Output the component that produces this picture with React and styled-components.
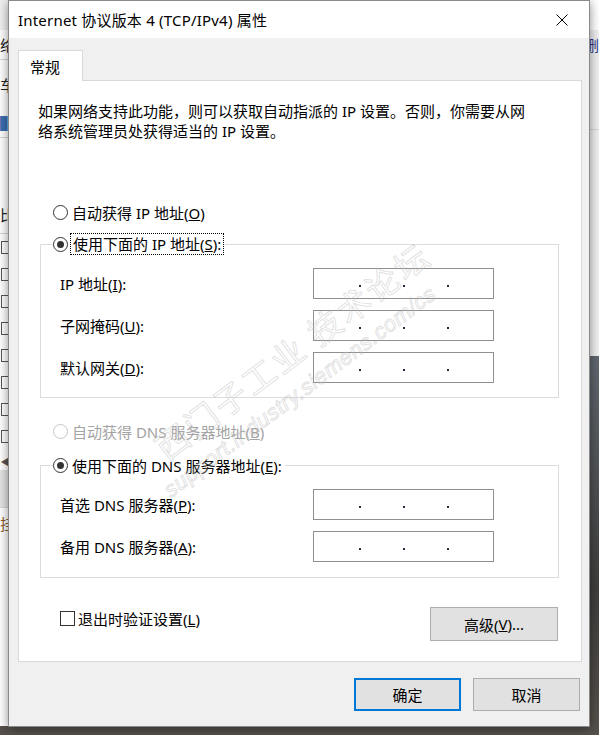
import React from 'react';
import styled, { createGlobalStyle } from 'styled-components';

const GlobalStyle = createGlobalStyle`
  html, body {
    margin: 0;
    padding: 0;
  }
  body {
    width: 599px;
    height: 735px;
    overflow: hidden;
    background: #3a3734;
    font-family: "Noto Sans", "Noto Sans CJK SC", sans-serif;
    font-size: 15px;
    color: #000;
  }
`;

const Desktop = styled.div`
  position: relative;
  width: 599px;
  height: 735px;
  overflow: hidden;
  background: linear-gradient(180deg, #7d8791 0%, #5f666e 50%, #3f3e3c 80%, #57514a 100%);
`;

const BackWindow = styled.div`
  position: absolute;
  left: ${(p) => p.$left}px;
  top: 0;
  width: ${(p) => p.$width}px;
  height: ${(p) => p.$height}px;
  background: ${(p) => p.$bg};
  overflow: hidden;
  display: flex;
  flex-direction: column;
  font-family: "Noto Sans CJK SC", sans-serif;
`;

const BgRow = styled.div`
  height: ${(p) => p.$h}px;
  flex: none;
  display: flex;
  align-items: center;
  padding-left: ${(p) => p.$indent || 0}px;
  background: ${(p) => p.$bg || 'transparent'};
  border-bottom: ${(p) => (p.$line ? '1px solid #d6d6d6' : 'none')};
  color: ${(p) => p.$color || '#222'};
  font-size: 15px;
  line-height: 1;
  white-space: nowrap;
  box-sizing: border-box;
`;

const BgCheck = styled.span`
  width: 11px;
  height: 11px;
  border: 1px solid #555;
  background: #fff;
  margin-left: 1px;
`;

const Dialog = styled.div`
  position: absolute;
  left: 8px;
  top: 0;
  width: 582px;
  height: 727px;
  box-sizing: border-box;
  border: 1px solid #8a8a8a;
  background: #f0f0f0;
  box-shadow: 0 2px 10px rgba(0, 0, 0, 0.45);
  display: flex;
  flex-direction: column;
`;

const TitleBar = styled.div`
  height: 37px;
  flex: none;
  background: #fff;
  display: flex;
  align-items: center;
  justify-content: space-between;
  padding-left: 9px;
`;

const Title = styled.div`
  font-size: 15px;
  line-height: 20px;
  letter-spacing: 0.2px;
  margin-top: 1px;
`;

const CloseButton = styled.div`
  width: 46px;
  height: 37px;
  display: flex;
  align-items: center;
  justify-content: center;
  margin-right: 4px;
`;

const Body = styled.div`
  flex: 1;
  display: flex;
  flex-direction: column;
  padding: 12px 7px 0 9px;
`;

const TabStrip = styled.div`
  display: flex;
  height: 30px;
  position: relative;
  z-index: 1;
`;

const Tab = styled.div`
  width: 65px;
  height: 31px;
  box-sizing: border-box;
  border: 1px solid #d9d9d9;
  border-bottom: none;
  background: #fff;
  padding-left: 11px;
  display: flex;
  align-items: center;
  font-family: "Noto Sans CJK SC", sans-serif;
`;

const Panel = styled.div`
  background: #fff;
  border: 1px solid #d9d9d9;
  padding-bottom: 20px;
`;

const Description = styled.p`
  margin: 0;
  padding: 20px 19px 0;
  line-height: 20px;
`;

const Options = styled.div`
  padding: 0 22px 0 21px;
  display: flex;
  flex-direction: column;
`;

const RadioRow = styled.div`
  height: 22px;
  display: flex;
  align-items: center;
  gap: 4px;
  padding-left: ${(p) => (p.$inLegend ? 0 : 13)}px;
  margin-top: ${(p) => p.$top || 0}px;
  color: ${(p) => (p.$disabled ? '#a3a3a3' : '#000')};
  white-space: nowrap;
`;

const RadioCircle = styled.span`
  width: 15px;
  height: 15px;
  box-sizing: border-box;
  border-radius: 50%;
  border: 1px solid ${(p) => (p.$disabled ? '#c6c6c6' : '#333')};
  background: #fff;
  display: flex;
  align-items: center;
  justify-content: center;
  flex: none;

  &::after {
    content: '';
    display: ${(p) => (p.$checked ? 'block' : 'none')};
    width: 7px;
    height: 7px;
    border-radius: 50%;
    background: #333;
  }
`;

const FocusLabel = styled.span`
  outline: 1px dotted #000;
  outline-offset: 1px;
  line-height: 18px;
  padding: 0 1px;
`;

const GroupBox = styled.fieldset`
  margin: ${(p) => p.$top}px 0 0;
  min-width: 0;
  border: 1px solid #dcdcdc;
  padding: 13px 0 ${(p) => p.$bottom}px 12px;
`;

const Legend = styled.legend`
  padding: 0 3px 0 0;
  height: 22px;
`;

const FieldGrid = styled.div`
  display: grid;
  grid-template-columns: 253px 181px;
  row-gap: 11px;
  padding-left: 7px;
  align-items: center;
`;

const FieldLabel = styled.span`
  line-height: 20px;
`;

const IpBox = styled.div`
  width: 181px;
  height: 31px;
  box-sizing: border-box;
  border: 1px solid #8f8f8f;
  background: #fff;
  display: flex;
  align-items: center;
  padding-left: 3px;
`;

const IpSegment = styled.span`
  width: 42px;
  flex: none;
`;

const IpDot = styled.span`
  width: 2px;
  height: 2px;
  flex: none;
  margin-top: 5px;
  background: #2a2440;
`;

const Footer = styled.div`
  display: flex;
  align-items: flex-start;
  justify-content: space-between;
  margin-top: 29px;
  padding: 0 1px 0 20px;
`;

const CheckRow = styled.label`
  display: flex;
  align-items: center;
  gap: 3px;
  height: 22px;
`;

const CheckBox = styled.span`
  width: 15px;
  height: 15px;
  box-sizing: border-box;
  border: 1px solid #333;
  background: #fff;
`;

const Button = styled.button`
  width: ${(p) => p.$width}px;
  height: ${(p) => p.$height}px;
  box-sizing: border-box;
  background: #e1e1e1;
  border: ${(p) => (p.$default ? '2px solid #0078d7' : '1px solid #adadad')};
  font: inherit;
  font-size: 15px;
  color: #000;
  padding: 0;
  display: flex;
  align-items: center;
  justify-content: center;
`;

const ButtonRow = styled.div`
  display: flex;
  justify-content: flex-end;
  gap: 12px;
  margin-top: 16px;
  padding-right: 2px;
`;

const Watermark = styled.div`
  position: absolute;
  left: ${(p) => p.$x}px;
  top: ${(p) => p.$y}px;
  transform: translate(-50%, -50%) rotate(-37deg);
  white-space: nowrap;
  pointer-events: none;
  color: rgba(255, 255, 255, 0.1);
  -webkit-text-stroke: 1px rgba(175, 175, 175, 0.38);
  font-size: ${(p) => p.$size}px;
  font-style: ${(p) => (p.$italic ? 'italic' : 'normal')};
  letter-spacing: ${(p) => p.$spacing}px;
  font-family: ${(p) => (p.$italic ? '"Liberation Sans", sans-serif' : '"Noto Sans CJK SC", sans-serif')};
  font-weight: 400;
`;

const CloseIcon = () => (
  <svg width="12" height="12" viewBox="0 0 12 12">
    <path d="M0.5 0.5 L11.5 11.5 M11.5 0.5 L0.5 11.5" stroke="#000" strokeWidth="1" fill="none" />
  </svg>
);

const IpInput = () => (
  <IpBox>
    <IpSegment />
    <IpDot />
    <IpSegment />
    <IpDot />
    <IpSegment />
    <IpDot />
    <IpSegment />
  </IpBox>
);

const Radio = ({ checked, disabled, children, top }) => (
  <RadioRow $disabled={disabled} $top={top}>
    <RadioCircle $checked={checked} $disabled={disabled} />
    <span>{children}</span>
  </RadioRow>
);

const leftRows = [
  { h: 30, bg: '#f0f0f0' },
  { h: 30, text: '络', line: true },
  { h: 48, text: '车' },
  { h: 30, text: '▌', color: '#3d6fb0', line: true },
  { h: 58 },
  { h: 38, text: '比', line: true },
  ...Array.from({ length: 8 }, () => ({ h: 27, check: true })),
  { h: 20, text: '◀', color: '#555' },
  { h: 38, bg: '#e4e4e4', line: true },
  { h: 30, text: '挂', color: '#8a5a2a' },
];

export default function App() {
  return (
    <Desktop>
      <GlobalStyle />
      <BackWindow $left={0} $width={20} $height={726} $bg="#fff">
        {leftRows.map((r, i) => (
          <BgRow key={i} $h={r.h} $bg={r.bg} $line={r.line} $color={r.color}>
            {r.check ? <BgCheck /> : r.text}
          </BgRow>
        ))}
      </BackWindow>
      <BackWindow $left={560} $width={39} $height={356} $bg="#f0f0f0">
        <BgRow $h={30} $bg="#fff" />
        <BgRow $h={28} $indent={24} $color="#2c3a8a">删除</BgRow>
        <BgRow $h={72} $line />
      </BackWindow>

      <Dialog>
        <TitleBar>
          <Title>Internet 协议版本 4 (TCP/IPv4) 属性</Title>
          <CloseButton>
            <CloseIcon />
          </CloseButton>
        </TitleBar>
        <Body>
          <TabStrip>
            <Tab>常规</Tab>
          </TabStrip>
          <Panel>
            <Description>
              如果网络支持此功能，则可以获取自动指派的 IP 设置。否则，你需要从网
              <br />
              络系统管理员处获得适当的 IP 设置。
            </Description>
            <Options>
              <Radio top={60}>
                自动获得 IP 地址(<u>O</u>)
              </Radio>
              <GroupBox $top={10} $bottom={14}>
                <Legend>
                  <RadioRow $inLegend>
                    <RadioCircle $checked />
                    <FocusLabel>
                      使用下面的 IP 地址(<u>S</u>):
                    </FocusLabel>
                  </RadioRow>
                </Legend>
                <FieldGrid>
                  <FieldLabel>
                    IP 地址(<u>I</u>):
                  </FieldLabel>
                  <IpInput />
                  <FieldLabel>
                    子网掩码(<u>U</u>):
                  </FieldLabel>
                  <IpInput />
                  <FieldLabel>
                    默认网关(<u>D</u>):
                  </FieldLabel>
                  <IpInput />
                </FieldGrid>
              </GroupBox>
              <Radio top={22} disabled>
                自动获得 DNS 服务器地址(<u>B</u>)
              </Radio>
              <GroupBox $top={12} $bottom={15}>
                <Legend>
                  <RadioRow $inLegend>
                    <RadioCircle $checked />
                    <span>
                      使用下面的 DNS 服务器地址(<u>E</u>):
                    </span>
                  </RadioRow>
                </Legend>
                <FieldGrid>
                  <FieldLabel>
                    首选 DNS 服务器(<u>P</u>):
                  </FieldLabel>
                  <IpInput />
                  <FieldLabel>
                    备用 DNS 服务器(<u>A</u>):
                  </FieldLabel>
                  <IpInput />
                </FieldGrid>
              </GroupBox>
              <Footer>
                <CheckRow>
                  <CheckBox />
                  <span>
                    退出时验证设置(<u>L</u>)
                  </span>
                </CheckRow>
                <Button $width={128} $height={34}>
                  高级(<u>V</u>)...
                </Button>
              </Footer>
            </Options>
          </Panel>
          <ButtonRow>
            <Button $width={107} $height={33} $default>
              确定
            </Button>
            <Button $width={107} $height={33}>
              取消
            </Button>
          </ButtonRow>
        </Body>
      </Dialog>

      <Watermark $x={292} $y={350} $size={33} $spacing={3}>
        西门子工业 技术论坛
      </Watermark>
      <Watermark $x={300} $y={392} $size={22} $spacing={0.5} $italic>
        support.industry.siemens.com/cs
      </Watermark>
    </Desktop>
  );
}
